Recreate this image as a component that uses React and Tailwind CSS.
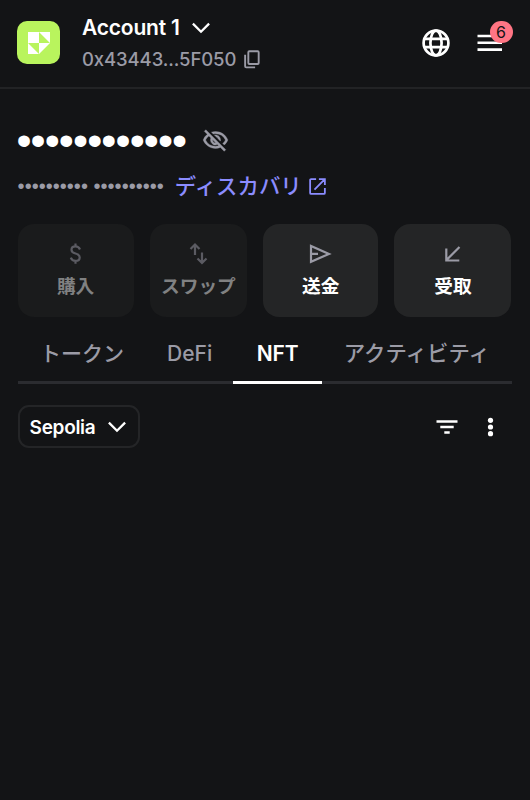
import React from 'react';

const latin = "font-['Inter','Noto_Sans_CJK_JP',sans-serif]";

function Chevron() {
  return (
    <svg className="block shrink-0" width="20" height="12" viewBox="0 0 20 12" fill="none" stroke="#fff" strokeWidth="2.3">
      <path d="M1.9 1.6 10 9.7 18.1 1.6" />
    </svg>
  );
}

function Logo() {
  return (
    <div className="flex h-[43px] w-[43px] shrink-0 items-center justify-center rounded-[10px] bg-[#b9f45d]">
      <svg width="22" height="22" viewBox="0 0 22 22" fill="#fff">
        <path d="M0 0h11v11H0zM11 0h11v11zM0 11l11 11H0zM11 11h11L11 22z" />
      </svg>
    </div>
  );
}

function Globe() {
  return (
    <svg className="block" width="28" height="28" viewBox="0 0 28 28" fill="none" stroke="#fff" strokeWidth="2.7">
      <circle cx="14" cy="14" r="12.4" />
      <ellipse cx="14" cy="14" rx="5.6" ry="12.4" />
      <path d="M2.4 9.8h23.2M2.4 18.2h23.2" />
    </svg>
  );
}

function EyeOff() {
  return (
    <svg className="block" width="27" height="27" viewBox="0 0 24 24" fill="#9b9ba6" stroke="#9b9ba6" strokeWidth=".3">
      <path d="M12 6a9.77 9.77 0 0 1 8.82 5.5 9.65 9.65 0 0 1-2.41 3.12l1.41 1.41c1.39-1.23 2.49-2.77 3.18-4.53C21.27 7.11 17 4 12 4c-1.27 0-2.49.2-3.64.57l1.65 1.65C10.66 6.09 11.32 6 12 6zm-1.07 1.14L13 9.21c.57.25 1.03.71 1.28 1.28l2.07 2.07c.08-.34.14-.7.14-1.07C16.5 9.01 14.48 7 12 7c-.37 0-.72.05-1.07.14zM2.01 3.87l2.68 2.68A11.738 11.738 0 0 0 1 11.5C2.73 15.89 7 19 12 19c1.52 0 2.98-.29 4.32-.82l3.42 3.42 1.41-1.41L3.42 2.45 2.01 3.87zm7.5 7.5 2.61 2.61c-.04.01-.08.02-.12.02a2.5 2.5 0 0 1-2.5-2.5c0-.05.01-.08.01-.13zm-3.4-3.4 1.75 1.75a4.6 4.6 0 0 0-.36 1.78 4.507 4.507 0 0 0 6.27 4.14l.98.98c-.88.24-1.8.38-2.75.38a9.77 9.77 0 0 1-8.82-5.5c.7-1.43 1.72-2.61 2.93-3.53z" />
    </svg>
  );
}

function Action({ width, label, muted, children }) {
  return (
    <button
      className={`flex h-[93px] flex-col items-center rounded-2xl pt-[17px] ${width} ${
        muted ? 'bg-[#1a1b1c] text-[#808182]' : 'bg-[#242526] text-white'
      }`}
    >
      <svg className={`block h-[25px] w-[25px] ${muted ? 'text-[#5b5b62]' : 'text-[#9b9ba6]'}`} viewBox="0 0 25 25" fill="none" stroke="currentColor" strokeWidth="2.2">
        {children}
      </svg>
      <span className="mt-[6px] font-['Noto_Sans_CJK_JP',sans-serif] text-[18.7px] leading-[26px] font-bold">{label}</span>
    </button>
  );
}

export default function App() {
  return (
    <div className={`h-[800px] w-[530px] overflow-hidden bg-[#131416] text-white ${latin}`}>
      <header className="flex h-[89px] justify-between border-b-2 border-[#222325] pr-[27px] pl-[17.4px]">
        <div className="flex pt-[21.4px]">
          <Logo />
          <div className="-mt-[7.4px] ml-[21.6px]">
            <div className="flex h-[27px] items-center gap-[11px]">
              <span className="text-[21px] leading-[27px] font-semibold tracking-[-0.2px]">Account 1</span>
              <Chevron />
            </div>
            <div className="mt-[5px] flex h-[27px] items-center gap-[8px] text-[#9b9ba6]">
              <span className="text-[18.5px] leading-[27px] font-medium tracking-[-0.1px]">0x43443...5F050</span>
              <svg width="16" height="19" viewBox="0 0 17 20" fill="none" stroke="currentColor" strokeWidth="2">
                <rect x="4.6" y="1.2" width="11" height="13.6" rx="1" />
                <path d="M1.2 5v12.2q0 1.2 1.2 1.2h9.4" />
              </svg>
            </div>
          </div>
        </div>
        <div className="flex items-start gap-[27px] pt-[29px]">
          <Globe />
          <div className="relative h-[28px] w-[26px]">
            <svg className="block" width="26" height="28" viewBox="0 0 26 28" stroke="#fff" strokeWidth="2.6">
              <path d="M.5 7h24.5M.5 13.8h24.5M.5 20.6h24.5" />
            </svg>
            <span className="absolute -top-[8px] left-[12.5px] flex h-[22px] w-[23px] items-center justify-center rounded-full bg-[#ff7584] text-[16px] leading-none text-[#131416]">6</span>
          </div>
        </div>
      </header>

      <main className="pt-[36px] pr-[18.5px] pl-[17.6px]">
        <div className="flex h-[30px] items-center gap-[16px]">
          <span className="-ml-[1.2px] font-['Liberation_Sans',sans-serif] text-[43px] leading-[30px] tracking-[-0.9px]">••••••••••••</span>
          <EyeOff />
        </div>
        <div className="mt-[16px] flex h-[30px] items-center">
          <span className="font-['Liberation_Sans',sans-serif] text-[20px] leading-[30px] tracking-[0.03px] text-[#9b9ba6]">•••••••••• ••••••••••</span>
          <span className="-mt-[2px] ml-[11px] font-['Noto_Sans_CJK_JP',sans-serif] text-[21.4px] leading-[30px] font-medium text-[#8b8cff]">ディスカバリ</span>
          <svg className="ml-[7.6px]" width="17" height="17" viewBox="0 0 18 18" fill="none" stroke="#8b8cff" strokeWidth="1.9">
            <path d="M7.5 1.2H2.2q-1 0-1 1v13.6q0 1 1 1h13.6q1 0 1-1v-5.3M10.5 1.2h6.3v6.3M16.5 1.5 5.8 12.2" />
          </svg>
        </div>

        <div className="mt-[23px] flex justify-between">
          <Action width="w-[116px]" label="購入" muted>
            <path d="M17 8.5Q15.6 5.4 12.5 5.4q-4 0-4 3.3 0 2.8 4 3.8t4.2 4q0 3.4-4.2 3.4-3.5 0-4.7-3.3M12.5 2.5v3M12.5 19.8v3" />
          </Action>
          <Action width="w-[97px]" label="スワップ" muted>
            <path d="M9 14V4M4.5 8 9 3.5 13.5 8M16 11.5v10.5M11.5 17.5l4.5 4.5 4.5-4.5" />
          </Action>
          <Action width="w-[115px]" label="送金">
            <path d="M3 5v15.8L21 12.9zM3 12.9h7" />
          </Action>
          <Action width="w-[117px]" label="受取">
            <path d="M19.5 6 6.5 19M6.3 7.5v12h13" />
          </Action>
        </div>

        <nav className="mt-[13px] flex h-[54px] border-b-[3px] border-[#2b2c30] text-[21px] leading-[47px] font-medium text-[#9b9ba6]">
          <span className="w-[128.6px] text-center">トークン</span>
          <span className="w-[87px] text-center text-[21px]">DeFi</span>
          <span className="h-[54px] w-[89px] border-b-[3px] border-white text-center text-[21px] font-semibold tracking-[-0.1px] text-white">NFT</span>
          <span className="flex-1 text-center text-[21.4px]">アクティビティ</span>
        </nav>

        <div className="mt-[21px] flex h-[43px] items-center justify-between">
          <button className="flex h-[43px] w-[122px] items-center justify-between rounded-[11px] border-2 border-[#242527] pr-[11px] pl-[10px]">
            <span className="pt-px text-[19px] leading-[27px] font-semibold tracking-[-0.3px]">Sepolia</span>
            <Chevron />
          </button>
          <div className="flex items-center gap-[28.5px] pr-[18px]">
            <svg width="22" height="16" viewBox="0 0 22 16" stroke="#fff" strokeWidth="2.3">
              <path d="M.5 2.5h21M4.3 8h13.4M8.3 13.5h5.4" />
            </svg>
            <svg width="7" height="20" viewBox="0 0 7 20" fill="#fff">
              <circle cx="3.5" cy="3.3" r="2.6" />
              <circle cx="3.5" cy="10" r="2.6" />
              <circle cx="3.5" cy="16.7" r="2.6" />
            </svg>
          </div>
        </div>
      </main>
    </div>
  );
}
